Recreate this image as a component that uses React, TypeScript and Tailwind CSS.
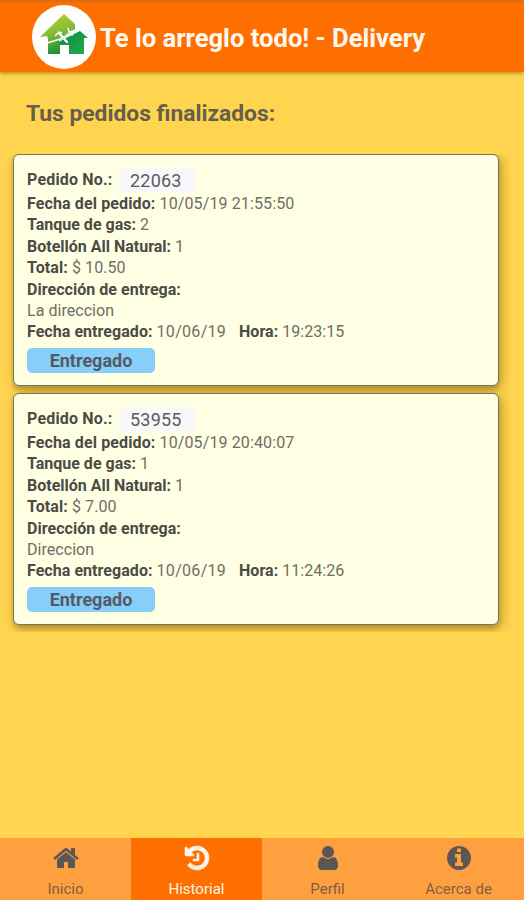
import React from "react";

type Order = {
  id: string;
  date: string;
  tanks: number;
  bottles: number;
  total: string;
  address: string;
  delivered: string;
  time: string;
};

const orders: Order[] = [
  { id: "22063", date: "10/05/19 21:55:50", tanks: 2, bottles: 1, total: "10.50", address: "La direccion", delivered: "10/06/19", time: "19:23:15" },
  { id: "53955", date: "10/05/19 20:40:07", tanks: 1, bottles: 1, total: "7.00", address: "Direccion", delivered: "10/06/19", time: "11:24:26" },
];

function Logo() {
  return (
    <div className="h-[64px] w-[64px] shrink-0 rounded-full bg-white">
      <svg viewBox="0 0 64 64" className="h-full w-full">
        <defs>
          <linearGradient id="lime" x1="0" y1="0" x2="0.3" y2="1">
            <stop offset="0" stopColor="#bdd435" />
            <stop offset="0.55" stopColor="#86bb35" />
            <stop offset="1" stopColor="#1d943d" />
          </linearGradient>
          <linearGradient id="green" x1="0" y1="0" x2="1" y2="1">
            <stop offset="0" stopColor="#078c43" />
            <stop offset="1" stopColor="#2aa74d" />
          </linearGradient>
        </defs>
        <path d="M8 32L32 9l11 10v5L28 36v13H16V34l-1-3z" fill="url(#lime)" />
        <path d="M24 38l18-9 6-3 8 7h-4v16H37v-9h-9v-2z" fill="url(#green)" />
        <path d="M15 38C27 35 38 31 46 23" stroke="#fff" strokeWidth="1.3" fill="none" />
        <path d="M27 28l8 9" stroke="#fff" strokeWidth="2.3" strokeLinecap="round" />
        <path d="M27 36l9-7 5 1" stroke="#e3f0d8" strokeWidth="2" fill="none" />
        <path d="M23 31l4-4 3 1M36 23l1 4 5-1" stroke="#fff" strokeWidth="1.5" fill="none" />
        <path d="M28 41h9v9h-9z" fill="#fff" />
      </svg>
    </div>
  );
}

function Label({ children }: { children: React.ReactNode }) {
  return <span className="font-bold text-[#4b4b46]">{children}</span>;
}

function OrderCard({ order }: { order: Order }) {
  return (
    <article className="h-[232px] w-[486px] rounded-[6px] border border-[#77745e] bg-[#ffffe3] px-[13px] pt-[13px] text-[16px] leading-[21.4px] text-[#6e6e67] shadow-[0_4px_4px_rgba(100,75,20,0.25),3px_3px_11px_rgba(110,80,0,0.4)]">
      <div className="flex h-[25px] items-start">
        <span className="w-[92px] pt-[1px] tracking-[0.18px]"><Label>Pedido No.:</Label></span>
        <span className="h-[24px] w-[76px] bg-[#f8f8fa] pl-[11px] pt-[2px] text-[18px] leading-[22px] tracking-[0.2px] text-[#5b5b60]">{order.id}</span>
      </div>
      <p className="tracking-[0.12px]"><Label>Fecha del pedido:</Label> {order.date}</p>
      <p><Label>Tanque de gas:</Label> {order.tanks}</p>
      <p><Label>Botellón All Natural:</Label> {order.bottles}</p>
      <p className="tracking-[0.09px]"><Label>Total:</Label> $ {order.total}</p>
      <p className="tracking-[0.04px]"><Label>Dirección de entrega:</Label></p>
      <p className="tracking-[0.04px]">{order.address}</p>
      <p className="flex tracking-[0.05px]">
        <span className="w-[212px]"><Label>Fecha entregado:</Label> <span className="tracking-[0.3px]">{order.delivered}</span></span>
        <span><Label>Hora:</Label> {order.time}</span>
      </p>
      <div className="mt-[5px] flex h-[25px] w-[128px] items-center justify-center rounded-[5px] bg-[#87cefa] text-[18px] font-bold text-[#555b60]">Entregado</div>
    </article>
  );
}

const tabs = [
  {
    label: "Inicio",
    active: false,
    path: "M1472 992v480q0 26-19 45t-45 19h-384v-384h-256v384h-384q-26 0-45-19t-19-45v-480q0-1 .5-3t.5-3l575-474 575 474q1 2 1 6zm223-69l-62 74q-8 9-21 11h-3q-13 0-21-7l-692-577-692 577q-12 8-24 7-13-2-21-11l-62-74q-8-10-7-23.5t11-21.5l719-599q32-26 76-26t76 26l244 204v-195q0-14 9-23t23-9h192q14 0 23 9t9 23v408l219 182q10 8 11 21.5t-7 23.5z",
  },
  {
    label: "Historial",
    active: true,
    path: "M1664 896q0 156-61 298t-164 245-245 164-298 61q-172 0-327-72.5t-264-204.5q-7-10-6.5-22.5t8.5-20.5l137-138q10-9 25-9 16 2 23 12 73 95 179 147t225 52q104 0 198.5-40.5t163.5-109.5 109.5-163.5 40.5-198.5-40.5-198.5-109.5-163.5-163.5-109.5-198.5-40.5q-98 0-188 35.5t-160 101.5l137 138q31 30 14 69-17 40-59 40h-448q-26 0-45-19t-19-45v-448q0-42 40-59 39-17 69 14l130 129q107-101 244.5-156.5t284.5-55.5q156 0 298 61t245 164 164 245 61 298zm-640-288v448q0 14-9 23t-23 9h-320q-14 0-23-9t-9-23v-64q0-14 9-23t23-9h224v-352q0-14 9-23t23-9h64q14 0 23 9t9 23z",
  },
  {
    label: "Perfil",
    active: false,
    path: "M1536 1399q0 109-62.5 187t-150.5 78h-854q-88 0-150.5-78t-62.5-187q0-85 8.5-160.5t31.5-152 58.5-131 94-89 134.5-34.5q131 128 313 128t313-128q76 0 134.5 34.5t94 89 58.5 131 31.5 152 8.5 160.5zm-256-887q0 159-112.5 271.5t-271.5 112.5-271.5-112.5-112.5-271.5 112.5-271.5 271.5-112.5 271.5 112.5 112.5 271.5z",
  },
  {
    label: "Acerca de",
    active: false,
    path: "M1152 1376v-160q0-14-9-23t-23-9h-96v-512q0-14-9-23t-23-9h-320q-14 0-23 9t-9 23v160q0 14 9 23t23 9h96v320h-96q-14 0-23 9t-9 23v160q0 14 9 23t23 9h448q14 0 23-9t9-23zm-128-896v-160q0-14-9-23t-23-9h-192q-14 0-23 9t-9 23v160q0 14 9 23t23 9h192q14 0 23-9t9-23zm640 416q0 209-103 385.5t-279.5 279.5-385.5 103-385.5-103-279.5-279.5-103-385.5 103-385.5 279.5-279.5 385.5-103 385.5 103 279.5 279.5 103 385.5z",
  },
];

export default function App() {
  return (
    <div className="flex h-[900px] w-[524px] flex-col overflow-hidden bg-[#ffd44f] font-[Roboto,sans-serif]">
      <header className="z-10 flex h-[72px] shrink-0 items-center gap-[4px] border-t-2 border-[#db6d18] bg-[#ff6f00] pl-[32px] shadow-[0_1px_4px_rgba(100,70,0,0.6)]">
        <Logo />
        <h1 className="whitespace-nowrap pt-[2px] text-[25.6px] font-bold text-[#fff8ee]">Te lo arreglo todo! - Delivery</h1>
      </header>
      <main className="flex-1">
        <h2 className="pl-[26px] pt-[27px] text-[22.8px] font-bold leading-[30px] text-[#665f4b]">Tus pedidos finalizados:</h2>
        <div className="mt-[25px] h-[478px] w-[511px] overflow-hidden pl-[13px]">
          <div className="flex flex-col gap-[7px]">
            {orders.map((order) => <OrderCard key={order.id} order={order} />)}
          </div>
        </div>
      </main>
      <nav className="grid h-[62px] shrink-0 grid-cols-4">
        {tabs.map(({ label, active, path }) => (
          <div key={label} className={active ? "flex flex-col items-center bg-[#ff6f00] pt-[6px] text-[#fff3e7]" : "flex flex-col items-center bg-[#ffa040] pt-[6px] text-[#5b5754]"}>
            <svg viewBox="0 0 1792 1792" fill="currentColor" stroke="currentColor" strokeWidth={active ? 36 : 0} className="h-[28px] w-[28px]"><path d={path} /></svg>
            <span className={active ? "mt-[7px] text-[15px] leading-[20px]" : "mt-[7px] text-[15px] leading-[20px] text-[#806044]"}>{label}</span>
          </div>
        ))}
      </nav>
    </div>
  );
}
